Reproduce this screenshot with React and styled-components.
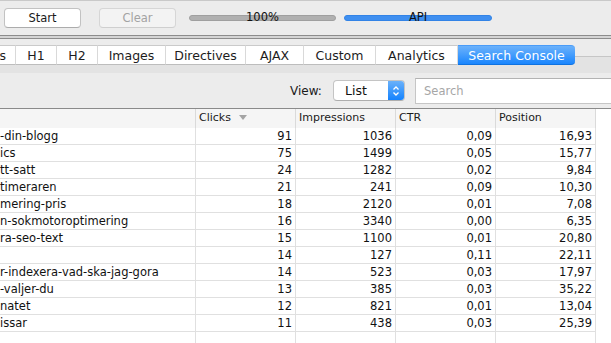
import styled, { createGlobalStyle } from "styled-components";

const tabs = [
  { label: "s", w: 16, cut: true },
  { label: "H1", w: 41 },
  { label: "H2", w: 41 },
  { label: "Images", w: 68 },
  { label: "Directives", w: 80 },
  { label: "AJAX", w: 58 },
  { label: "Custom", w: 72 },
  { label: "Analytics", w: 82 },
  { label: "Search Console", w: 117, active: true },
];

const rows = [
  ["-din-blogg", "91", "1036", "0,09", "16,93"],
  ["ics", "75", "1499", "0,05", "15,77"],
  ["tt-satt", "24", "1282", "0,02", "9,84"],
  ["timeraren", "21", "241", "0,09", "10,30"],
  ["mering-pris", "18", "2120", "0,01", "7,08"],
  ["n-sokmotoroptimering", "16", "3340", "0,00", "6,35"],
  ["ra-seo-text", "15", "1100", "0,01", "20,80"],
  ["", "14", "127", "0,11", "22,11"],
  ["r-indexera-vad-ska-jag-gora", "14", "523", "0,03", "17,97"],
  ["-valjer-du", "13", "385", "0,03", "35,22"],
  ["natet", "12", "821", "0,01", "13,04"],
  ["issar", "11", "438", "0,03", "25,39"],
  ["", "", "", "", ""],
];

const columns = ["", "Clicks", "Impressions", "CTR", "Position"];

const App = () => {
  return (
    <>
      <GlobalStyle />
      <Window>
        <TopBar>
          <Button>Start</Button>
          <Button $disabled>Clear</Button>
          <Progress $w={147} $gap={13}>
            <Bar />
            <BarLabel>100%</BarLabel>
          </Progress>
          <Progress $w={148} $gap={8}>
            <Bar $blue />
            <BarLabel>API</BarLabel>
          </Progress>
        </TopBar>
        <Rule />
        <TabView>
          <TabRow>
            {tabs.map((t) => (
              <Tab key={t.label} $w={t.w} $cut={t.cut} $active={t.active}>
                {t.label}
              </Tab>
            ))}
          </TabRow>
          <Strip />
        </TabView>
        <Toolbar>
          <ViewLabel>View:</ViewLabel>
          <Select>
            <SelectText>List</SelectText>
            <Stepper>
              <svg width="8" height="12" viewBox="0 0 8 12">
                <path d="M1.5 4.5 L4 2 L6.5 4.5" fill="none" stroke="#fff" strokeWidth="1.3" />
                <path d="M1.5 7.5 L4 10 L6.5 7.5" fill="none" stroke="#fff" strokeWidth="1.3" />
              </svg>
            </Stepper>
          </Select>
          <SearchField placeholder="Search" readOnly />
        </Toolbar>
        <Table>
          <HeaderRow>
            {columns.map((c, i) => (
              <HeadCell key={i}>
                {c}
                {c === "Clicks" && <SortArrow />}
              </HeadCell>
            ))}
          </HeaderRow>
          {rows.map((r, i) => (
            <Row key={i}>
              {r.map((v, j) => (
                <Cell key={j} $first={j === 0}>
                  {v}
                </Cell>
              ))}
            </Row>
          ))}
        </Table>
      </Window>
    </>
  );
};

export default App;

const GlobalStyle = createGlobalStyle`
  * { box-sizing: border-box; }
  html, body {
    margin: 0;
    padding: 0;
    background: #ececec;
  }
  body {
    font-family: "DejaVu Sans", "Liberation Sans", sans-serif;
    overflow: hidden;
  }
`;

const Window = styled.div`
  width: 611px;
  height: 343px;
  overflow: hidden;
  display: flex;
  flex-direction: column;
  background: #ececec;
`;

const TopBar = styled.div`
  height: 35px;
  flex-shrink: 0;
  border-top: 1px solid #c9c9c9;
  display: flex;
  align-items: center;
  padding-left: 4px;
  gap: 18px;
`;

const Button = styled.div`
  width: 77px;
  height: 20px;
  display: flex;
  align-items: center;
  justify-content: center;
  border-radius: 4px;
  font-size: 11.5px;
  background: ${(p) => (p.$disabled ? "#f3f3f3" : "#ffffff")};
  color: ${(p) => (p.$disabled ? "#a3a3a3" : "#1a1a1a")};
  border: 1px solid ${(p) => (p.$disabled ? "#d6d6d6" : "#c2c2c2")};
  border-bottom-color: ${(p) => (p.$disabled ? "#cfcfcf" : "#acacac")};
`;

const Progress = styled.div`
  width: ${(p) => p.$w}px;
  height: 20px;
  margin-left: ${(p) => p.$gap - 18}px;
  display: grid;
  align-items: center;
  justify-items: center;
  & > * {
    grid-area: 1 / 1;
  }
`;

const Bar = styled.div`
  width: 100%;
  height: 6px;
  border-radius: 3px;
  background: ${(p) => (p.$blue ? "#3f8ff0" : "#b0b0b0")};
  border: 1px solid ${(p) => (p.$blue ? "#3283e6" : "#9f9f9f")};
`;

const BarLabel = styled.span`
  font-size: 11.5px;
  color: #111;
  line-height: 1;
`;

const Rule = styled.div`
  height: 4px;
  flex-shrink: 0;
  border-top: 1px solid #8c8c8c;
  border-bottom: 1px solid #8c8c8c;
  background: #d4d4d4;
`;

const TabView = styled.div`
  flex-shrink: 0;
  padding-top: 6px;
`;

const TabRow = styled.div`
  height: 20px;
  display: flex;
  background: linear-gradient(
    #ececec 0 11px,
    #c6c6c6 11px 12px,
    #e3e3e3 12px
  );
`;

const Tab = styled.div`
  width: ${(p) => p.$w}px;
  height: 20px;
  display: flex;
  align-items: center;
  justify-content: ${(p) => (p.$cut ? "flex-end" : "center")};
  padding-right: ${(p) => (p.$cut ? "9px" : "0")};
  font-size: 12.5px;
  white-space: nowrap;
  color: ${(p) => (p.$active ? "#ffffff" : "#1c1c1c")};
  background: ${(p) =>
    p.$active ? "linear-gradient(#6cb2fb, #1a86fe)" : "#ffffff"};
  border-top: 1px solid ${(p) => (p.$active ? "#4a9cf8" : "#cacaca")};
  border-bottom: 1px solid ${(p) => (p.$active ? "#0f72e0" : "#bdbdbd")};
  border-right: ${(p) => (p.$active ? "none" : "1px solid #d9d9d9")};
  border-radius: ${(p) => (p.$active ? "0 4px 4px 0" : "0")};
`;

const Strip = styled.div`
  height: 8px;
  background: #e3e3e3;
`;

const Toolbar = styled.div`
  height: 35px;
  flex-shrink: 0;
  display: flex;
  align-items: center;
  padding-left: 290px;
  background: #ececec;
`;

const ViewLabel = styled.span`
  flex-shrink: 0;
  width: 43px;
  font-size: 12px;
  color: #1a1a1a;
`;

const Select = styled.div`
  flex-shrink: 0;
  width: 72px;
  height: 21px;
  display: flex;
  background: #ffffff;
  border: 1px solid #c4c4c4;
  border-bottom-color: #adadad;
  border-radius: 4px;
  overflow: hidden;
  margin-right: 10px;
`;

const SelectText = styled.span`
  flex: 1;
  font-size: 12.5px;
  color: #111;
  padding-left: 11px;
  display: flex;
  align-items: center;
`;

const Stepper = styled.div`
  width: 16px;
  display: flex;
  align-items: center;
  justify-content: center;
  background: linear-gradient(#6ab1fa, #1583fe);
`;

const SearchField = styled.input`
  flex-shrink: 0;
  width: 220px;
  height: 26px;
  padding: 0 0 0 8px;
  border: 1px solid #c6c6c6;
  border-top-color: #b3b3b3;
  background: #ffffff;
  outline: none;
  font-family: "DejaVu Sans", sans-serif;
  font-size: 11.5px;
  &::placeholder {
    color: #a6a6a6;
  }
`;

const Table = styled.div`
  flex: 1;
  background: #ffffff;
  border-top: 1px solid #8a8a8a;
`;

const HeaderRow = styled.div`
  display: grid;
  grid-template-columns: 196px repeat(4, 100px);
  height: 19px;
`;

const HeadCell = styled.div`
  display: flex;
  align-items: center;
  padding-left: 3px;
  padding-bottom: 2px;
  font-size: 11px;
  color: #1a1a1a;
  background: #f5f5f5;
  border-right: 1px solid #dadada;
`;

const SortArrow = styled.span`
  margin-left: 8px;
  width: 0;
  height: 0;
  border-left: 4px solid transparent;
  border-right: 4px solid transparent;
  border-top: 5px solid #a4a4a4;
`;

const Row = styled.div`
  display: grid;
  grid-template-columns: 196px repeat(4, 100px);
  height: 17px;
  border-bottom: 1px solid #e0e0e0;
  width: 596px;
`;

const Cell = styled.div`
  display: flex;
  align-items: center;
  justify-content: ${(p) => (p.$first ? "flex-start" : "flex-end")};
  padding-right: ${(p) => (p.$first ? "0" : "3px")};
  font-size: 11.5px;
  color: #111;
  white-space: nowrap;
  overflow: hidden;
  border-right: 1px solid #e0e0e0;
`;
